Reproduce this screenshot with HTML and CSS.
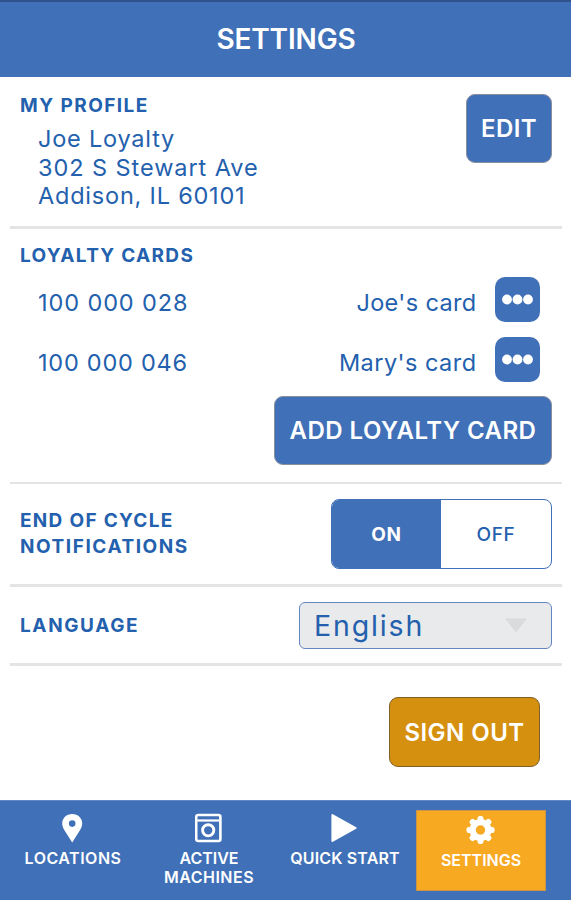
FILE: index.html
```html
<!DOCTYPE html>
<html lang="en">
<head>
<meta charset="utf-8">
<title>Settings</title>
<link rel="stylesheet" href="styles.css">
</head>
<body>
<div class="app">
  <header class="header"><h1>SETTINGS</h1></header>
  <main>
    <section class="section profile">
      <div>
        <h2 class="wide">MY PROFILE</h2>
        <address>
          <div class="line">Joe Loyalty</div>
          <div class="line street">302 S Stewart Ave</div>
          <div class="line">Addison, IL 60101</div>
        </address>
      </div>
      <button class="btn edit">EDIT</button>
    </section>

    <section class="section cards">
      <h2>LOYALTY CARDS</h2>
      <div class="card-row">
        <span class="number">100 000 028</span>
        <span class="name">Joe's card</span>
        <button class="more" aria-label="More"><svg width="33" height="11" viewBox="0 0 33 11" fill="#fff"><circle cx="6" cy="5.500" r="4.900"/><circle cx="16.500" cy="5.500" r="4.900"/><circle cx="27" cy="5.500" r="4.900"/></svg></button>
      </div>
      <div class="card-row">
        <span class="number second">100 000 046</span>
        <span class="name mary">Mary's card</span>
        <button class="more" aria-label="More"><svg width="33" height="11" viewBox="0 0 33 11" fill="#fff"><circle cx="6" cy="5.500" r="4.900"/><circle cx="16.500" cy="5.500" r="4.900"/><circle cx="27" cy="5.500" r="4.900"/></svg></button>
      </div>
      <button class="btn add">ADD LOYALTY CARD</button>
    </section>

    <section class="section notify">
      <h2>END OF CYCLE<br><span class="wider">NOTIFICATIONS</span></h2>
      <div class="toggle"><span class="on">ON</span><span class="off">OFF</span></div>
    </section>

    <section class="section language">
      <h2 class="widest">LANGUAGE</h2>
      <div class="select"><span>English</span>
        <svg width="24" height="15" viewBox="0 0 24 15"><path d="M1 .5h22L12 14.500z" fill="#d9dbdc"/></svg>
      </div>
    </section>

    <div class="actions"><button class="btn signout">SIGN OUT</button></div>
  </main>

  <nav class="nav">
    <a class="item">
      <svg width="28" height="30" viewBox="0.8 0 28 30"><path fill="#fff" fill-rule="evenodd" d="M14 1C8.200 1 4 5.200 4 10.500c0 2.300.9 4.400 2.100 6.500L14 29.500 21.900 17c1.200-2.100 2.100-4.200 2.100-6.500C24 5.200 19.800 1 14 1zm0 6.300a3.300 3.300 0 1 1 0 6.600 3.300 3.300 0 0 1 0-6.600z"/></svg>
      <span class="loc">LOCATIONS</span>
    </a>
    <a class="item">
      <svg width="28" height="30" viewBox="0.8 0 28 30" fill="none" stroke="#fff"><rect x="2" y="2" width="24.200" height="26" rx="2" stroke-width="2.600"/><path d="M3 7.500h22" stroke-width="2.200"/><circle cx="14" cy="17.300" r="5.600" stroke-width="2.900"/></svg>
      <span>ACTIVE<br><span class="mach">MACHINES</span></span>
    </a>
    <a class="item">
      <svg width="28" height="30" viewBox="0.8 0 28 30"><path d="M2.200 2v26L25.500 15z" fill="#fff" stroke="#fff" stroke-width="2" stroke-linejoin="round"/></svg>
      <span class="quick">QUICK START</span>
    </a>
    <a class="item active">
      <svg width="30" height="30" viewBox="-14.5 -15 30 30">
        <g fill="#fff">
          <g id="teeth">
            <rect x="-2.900" y="-14" width="5.800" height="28" rx="2.200"/>
            <rect x="-14" y="-2.900" width="28" height="5.800" rx="2.200"/>
          </g>
          <use href="#teeth" transform="rotate(45)"/>
          <circle r="11"/>
        </g>
        <circle r="4.700" fill="#f7a922"/>
      </svg>
      <span>SETTINGS</span>
    </a>
  </nav>
</div>
</body>
</html>
```
FILE: styles.css
```css
* { box-sizing: border-box; }
body { margin: 0; background: #fff; color: #2360ad; font-family: Inter, "Liberation Sans", sans-serif; }
h1, h2 { margin: 0; }
address { font-style: normal; }
button { font-family: inherit; margin: 0; padding: 0; border: 0; }
svg { display: block; flex: none; }

.app { width: 571px; height: 900px; display: flex; flex-direction: column; overflow: hidden; }

.header { height: 77px; flex: none; padding-bottom: 2px; background: #4070b7; border-top: 2px solid #2f528c; display: flex; align-items: center; justify-content: center; }
.header h1 { color: #fff; font-size: 28px; line-height: 34px; font-weight: 600; letter-spacing: -.15px; padding-left: 1px; }

main { flex: 1; padding: 0 9px 0 10px; }
.section { border-bottom: 3px solid #e4e4e5; padding: 0 10px; }
h2 { font-size: 19px; line-height: 20px; font-weight: 700; letter-spacing: 1.300px; }
h2.wide { letter-spacing: 1.450px; }
h2.widest { letter-spacing: 1.600px; padding-top: 2px; }
.wider { letter-spacing: 1.550px; }

.btn { height: 69px; border: 1px solid #8a8f9e; border-radius: 9px; background: #4070b7; color: #fff; font-size: 24px; font-weight: 600; letter-spacing: .46px; text-align: center; }

.profile { height: 152px; padding-top: 18px; display: flex; justify-content: space-between; align-items: flex-start; }
h2.wide { padding-top: 1px; }
address { padding: 9px 0 0 18px; font-size: 23.500px; line-height: 28.700px; letter-spacing: .79px; }
.street { letter-spacing: .93px; }
.edit { width: 86px; margin-top: -1px; }

.cards { height: 255px; border-bottom-width: 2px; padding-top: 17px; display: flex; flex-direction: column; }
.card-row { height: 45px; margin-top: 15px; padding: 0 12px 0 18px; display: flex; align-items: center; font-size: 23.500px; letter-spacing: .35px; }
.cards h2 + .card-row { margin-top: 11px; }
.number { flex: 1; letter-spacing: .9px; padding-top: 6px; }
.number.second { letter-spacing: .75px; }
.name { padding-top: 6px; margin-right: 18.500px; }
.mary { letter-spacing: .45px; }
.more { width: 45px; height: 45px; border-radius: 10px; background: #4070b7; display: flex; align-items: center; justify-content: center; }
.add { width: 278px; align-self: flex-end; margin-top: 14px; }

.notify { height: 103px; display: flex; align-items: center; justify-content: space-between; }
.notify h2 { line-height: 26px; }
.toggle { width: 221px; height: 70px; display: flex; border: 1px solid #4070b7; border-radius: 8px; overflow: hidden; font-size: 19px; }
.toggle span { flex: 1; display: flex; align-items: center; justify-content: center; }
.toggle .on { flex: 0 0 109px; background: #4070b7; color: #fff; font-weight: 700; letter-spacing: .8px; }
.off { font-weight: 500; letter-spacing: .6px; }

.language { height: 79px; display: flex; align-items: center; justify-content: space-between; }
.select { width: 253px; height: 47px; padding: 0 23px 0 14px; display: flex; align-items: center; justify-content: space-between; border: 1px solid #6487c3; border-radius: 6px; background: #e9eaeb; font-size: 28.500px; letter-spacing: 1.850px; }

.actions { display: flex; justify-content: flex-end; padding: 31px 22px 0 0; }
.signout { width: 151px; height: 70px; background: #d6900f; border-color: #80602a; }

.nav { height: 100px; flex: none; padding-left: 5px; background: #4070b7; border-top: 1px solid #6288c3; display: flex; }
.item { width: 136px; padding-top: 12px; display: flex; flex-direction: column; align-items: center; text-align: center; color: #fff; font-size: 16px; font-weight: 600; line-height: 19px; }
.item > span { margin-top: 6px; }
.item .loc, .mach { letter-spacing: .5px; }
.quick { letter-spacing: .15px; }
.active { width: 130px; height: 81px; margin: 9px 0 0 3px; padding-top: 4px; background: #f7a922; border: 1px solid #c99446; }
```
